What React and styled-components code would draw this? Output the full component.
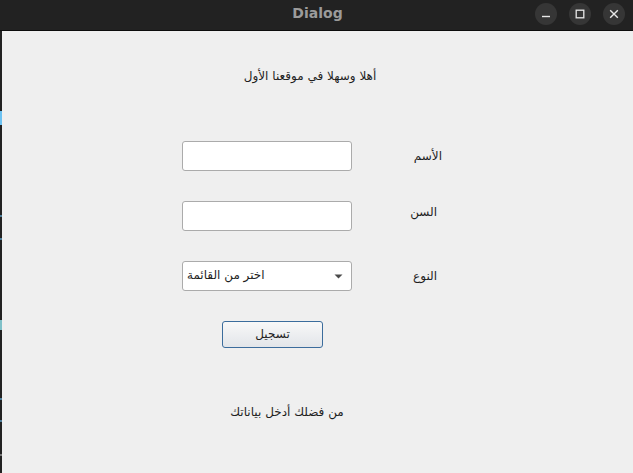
import React from 'react';
import styled, { createGlobalStyle } from 'styled-components';

const GlobalStyle = createGlobalStyle`
  html, body {
    margin: 0;
    padding: 0;
    background: #efefef;
  }
  #root {
    width: 633px;
    height: 473px;
    overflow: hidden;
  }
`;

const arabicFont = `"DejaVu Sans", "Noto Sans", sans-serif`;

const Window = styled.div`
  width: 633px;
  height: 473px;
  display: flex;
  flex-direction: column;
  background: #efefef;
`;

const TitleBar = styled.div`
  height: 30px;
  flex: none;
  background: #222222;
  border-bottom: 1px solid #0c0c0c;
  display: grid;
  grid-template-columns: 1fr auto 1fr;
  align-items: center;
`;

const Title = styled.div`
  grid-column: 2;
  font-family: "DejaVu Sans", "Noto Sans", sans-serif;
  font-weight: bold;
  font-size: 14px;
  color: #9b9b9b;
  padding-bottom: 5px;
  padding-left: 2px;
`;

const Controls = styled.div`
  grid-column: 3;
  justify-self: end;
  display: flex;
  gap: 12px;
  padding-right: 8px;
  padding-bottom: 3px;
`;

const CtrlButton = styled.div`
  width: 22px;
  height: 22px;
  border-radius: 50%;
  background: #363636;
  display: flex;
  align-items: center;
  justify-content: center;
`;

const Body = styled.div`
  flex: 1;
  display: flex;
`;

const Strip = styled.div`
  width: 2px;
  flex: none;
  background: linear-gradient(
    to bottom,
    #222 0px, #222 80px,
    #6cc2f2 80px, #6cc2f2 94px,
    #222 94px, #222 184px,
    #4e7e9a 184px, #4e7e9a 186px,
    #222 186px, #222 207px,
    #4e7e9a 207px, #4e7e9a 209px,
    #222 209px, #222 289px,
    #7fc0c8 289px, #7fc0c8 299px,
    #222 299px, #222 367px,
    #4e7e9a 367px, #4e7e9a 369px,
    #222 369px, #222 389px,
    #4e7e9a 389px, #4e7e9a 391px,
    #222 391px, #222 423px,
    #777 423px, #777 425px,
    #222 425px
  );
`;

const Content = styled.div`
  flex: 1;
  display: flex;
  flex-direction: column;
  padding-top: 37px;
  font-family: ${arabicFont};
  font-size: 12px;
  color: #1e1e1e;
`;

const Caption = styled.div`
  width: 200px;
  margin-left: ${p => p.$left}px;
  text-align: center;
  line-height: 16px;
  direction: rtl;
`;

const Form = styled.div`
  display: flex;
  flex-direction: column;
  gap: 30px;
  margin-top: 57px;
  padding-left: 180px;
`;

const FieldRow = styled.div`
  display: flex;
  align-items: center;
  height: 30px;
`;

const TextInput = styled.div`
  width: 170px;
  height: 30px;
  box-sizing: border-box;
  border: 1px solid #ababab;
  border-radius: 3px;
  background: #ffffff;
`;

const Combo = styled(TextInput)`
  display: flex;
  align-items: center;
  justify-content: space-between;
  padding: 0 8px 0 4px;
  direction: ltr;
`;

const ComboText = styled.span`
  direction: rtl;
  line-height: 16px;
  padding-bottom: 2px;
`;

const Label = styled.div`
  width: 90px;
  box-sizing: border-box;
  padding-right: ${p => p.$inset}px;
  text-align: right;
  direction: rtl;
  line-height: 16px;
  margin-bottom: ${p => p.$raise}px;
`;

const ButtonRow = styled.div`
  padding-left: 40px;
`;

const PushButton = styled.button`
  width: 101px;
  height: 27px;
  box-sizing: border-box;
  border: 1px solid #3b6c9c;
  border-radius: 3px;
  background: linear-gradient(to bottom, #f8f8f8, #e2e5e9);
  font-family: ${arabicFont};
  font-size: 12px;
  color: #1e1e1e;
  padding: 0 0 2px;
  direction: rtl;
`;

const Footer = styled(Caption)`
  margin-top: 56px;
`;

function Arrow() {
  return (
    <svg width="9" height="5" viewBox="0 0 9 5">
      <path d="M0.5 0.5 H8.5 L4.5 4.5 Z" fill="#4a4a4a" />
    </svg>
  );
}

export default function App() {
  return (
    <Window>
      <GlobalStyle />
      <TitleBar>
        <Title>Dialog</Title>
        <Controls>
          <CtrlButton>
            <svg width="10" height="10" viewBox="0 0 10 10">
              <path d="M1 7.5 H9" stroke="#e8e8e8" strokeWidth="1.4" />
            </svg>
          </CtrlButton>
          <CtrlButton>
            <svg width="10" height="10" viewBox="0 0 10 10">
              <rect x="1.2" y="1.2" width="7.6" height="7.6" fill="none" stroke="#e8e8e8" strokeWidth="1.3" />
            </svg>
          </CtrlButton>
          <CtrlButton>
            <svg width="10" height="10" viewBox="0 0 10 10">
              <path d="M1.2 1.2 L8.8 8.8 M8.8 1.2 L1.2 8.8" stroke="#e8e8e8" strokeWidth="1.4" />
            </svg>
          </CtrlButton>
        </Controls>
      </TitleBar>
      <Body>
        <Strip />
        <Content>
          <Caption $left={208}>أهلا وسهلا في موقعنا الأول</Caption>
          <Form>
            <FieldRow>
              <TextInput />
              <Label $inset={0} $raise={0}>الأسم</Label>
            </FieldRow>
            <FieldRow>
              <TextInput />
              <Label $inset={5} $raise={9}>السن</Label>
            </FieldRow>
            <FieldRow>
              <Combo>
                <ComboText>اختر من القائمة</ComboText>
                <Arrow />
              </Combo>
              <Label $inset={5} $raise={0}>النوع</Label>
            </FieldRow>
            <ButtonRow>
              <PushButton>تسجيل</PushButton>
            </ButtonRow>
          </Form>
          <Footer $left={185}>من فضلك أدخل بياناتك</Footer>
        </Content>
      </Body>
    </Window>
  );
}
